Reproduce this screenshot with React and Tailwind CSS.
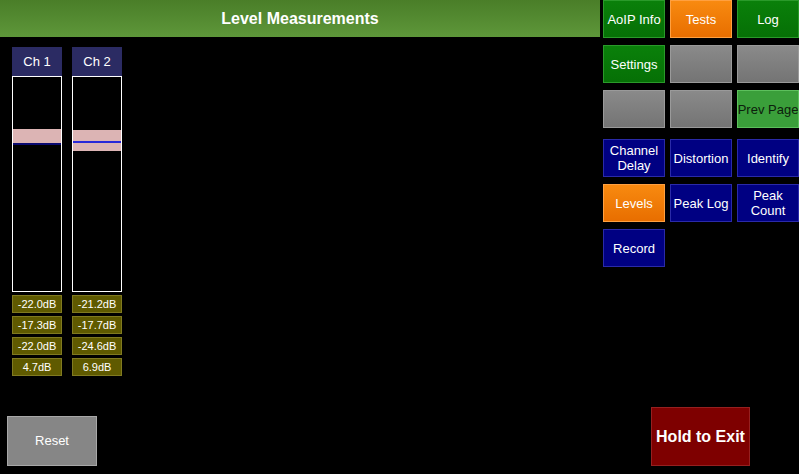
const channels = [
  { name: 'Ch 1', band: [52, 66], line: 66, lineCls: 'h-[2px] bg-[#0a0a70]', values: ['-22.0dB', '-17.3dB', '-22.0dB', '4.7dB'] },
  { name: 'Ch 2', band: [53, 74], line: 64, lineCls: 'h-[2px] bg-[#2828d8]', values: ['-21.2dB', '-17.7dB', '-24.6dB', '6.9dB'] },
];

const styles = {
  green: 'bg-gradient-to-b from-[#0a800a] to-[#067006] border border-[#2a9a2a] text-white',
  orange: 'bg-gradient-to-b from-[#f88a10] to-[#e86e00] border border-[#ffa040] text-white',
  grey: 'bg-gradient-to-b from-[#8a8a8a] to-[#747474] border border-[#9a9a9a]',
  light: 'bg-[#3a9f3a] border border-[#5cc05c] text-[#0c200c]',
  blue: 'bg-[#000082] border border-[#2a2aa8] text-white',
};

const topButtons = [
  ['AoIP Info', 'green'], ['Tests', 'orange'], ['Log', 'green'],
  ['Settings', 'green'], ['', 'grey'], ['', 'grey'],
  ['', 'grey'], ['', 'grey'], ['Prev Page', 'light'],
];

const testButtons = [
  ['Channel Delay', 'blue'], ['Distortion', 'blue'], ['Identify', 'blue'],
  ['Levels', 'orange'], ['Peak Log', 'blue'], ['Peak Count', 'blue'],
  ['Record', 'blue'],
];

function Btn({ label, kind }) {
  return (
    <div className={`h-[38px] flex items-center justify-center text-center text-[13px] leading-[15px] px-1 whitespace-nowrap overflow-hidden ${styles[kind]}`}>
      {label.includes(' ') && (label === 'Channel Delay' || label === 'Peak Count') ? (
        <span>{label.split(' ')[0]}<br />{label.split(' ')[1]}</span>
      ) : label}
    </div>
  );
}

function Meter({ ch }) {
  return (
    <div className="w-[50px] flex flex-col">
      <div className="h-[29px] bg-[#2b2b63] text-white text-[13px] flex items-center justify-center">{ch.name}</div>
      <div className="relative h-[216px] border border-white bg-black">
        <div className="absolute left-0 right-0 bg-[#dcb4b4]" style={{ top: ch.band[0], height: ch.band[1] - ch.band[0] }} />
        <div className={`absolute left-0 right-0 ${ch.lineCls}`} style={{ top: ch.line }} />
      </div>
      <div className="mt-[3px] flex flex-col gap-[3px]">
        {ch.values.map((v, i) => (
          <div key={i} className="h-[18px] bg-[#5f5a00] border border-[#807a20] text-white text-[11px] flex items-center justify-center">{v}</div>
        ))}
      </div>
    </div>
  );
}

export default function App() {
  return (
    <div className="w-[799px] h-[474px] bg-black flex overflow-hidden" style={{ fontFamily: '"Liberation Sans", Arial, sans-serif' }}>
      <div className="w-[602px] flex flex-col">
        <div className="h-[37px] bg-gradient-to-b from-[#4a7e28] to-[#5e973a] flex items-center justify-center text-white font-bold text-[16px]">
          Level Measurements
        </div>
        <div className="flex gap-[10px] pl-3 mt-[10px]">
          {channels.map((ch) => <Meter key={ch.name} ch={ch} />)}
        </div>
        <div className="mt-auto mb-2 ml-[7px] w-[90px] h-[50px] bg-[#868686] border border-[#a8a8a8] text-white text-[13px] flex items-center justify-center">
          Reset
        </div>
      </div>
      <div className="ml-[3px] flex-1 flex flex-col">
        <div className="grid grid-cols-[62px_62px_62px] gap-x-[5px] gap-y-[7px]">
          {topButtons.map(([l, k], i) => <Btn key={i} label={l} kind={k} />)}
        </div>
        <div className="mt-[11px] grid grid-cols-[62px_62px_62px] gap-x-[5px] gap-y-[7px]">
          {testButtons.map(([l, k], i) => <Btn key={i} label={l} kind={k} />)}
        </div>
        <div className="mt-auto mb-2 ml-[48px] w-[99px] h-[59px] bg-[#7e0000] border border-[#962020] text-white font-bold text-[16px] flex items-center justify-center">
          Hold to Exit
        </div>
      </div>
    </div>
  );
}
